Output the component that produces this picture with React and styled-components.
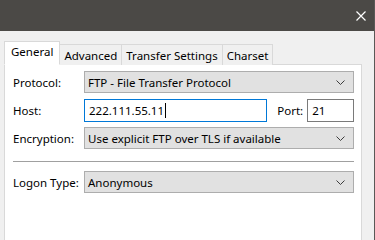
import React from 'react';
import styled, { createGlobalStyle } from 'styled-components';

const GlobalStyle = createGlobalStyle`
  html, body {
    margin: 0;
    padding: 0;
    background: #f0f0f0;
  }
  body {
    font-family: "Noto Sans", "Open Sans", sans-serif;
    font-size: 11.5px;
    color: #000;
  }
`;

const Window = styled.div`
  width: 375px;
  height: 240px;
  box-sizing: border-box;
  border-right: 1px solid #5a5856;
  background: #f0f0f0;
  overflow: hidden;
  display: flex;
  flex-direction: column;
`;

const TitleBar = styled.div`
  height: 31px;
  flex: none;
  background: #4b4946;
  display: flex;
  justify-content: flex-end;
  align-items: center;
`;

const CloseButton = styled.div`
  width: 26px;
  height: 31px;
  display: flex;
  align-items: center;
  justify-content: center;
`;

const Body = styled.div`
  flex: 1;
  padding: 10px 12px 0 4px;
  display: flex;
  flex-direction: column;
`;

const TabStrip = styled.div`
  display: flex;
  align-items: flex-end;
  height: 24px;
  position: relative;
  z-index: 1;
`;

const Tab = styled.div`
  box-sizing: border-box;
  height: ${({ active }) => (active ? '24px' : '21px')};
  padding: 0 ${({ active }) => (active ? '6px' : '4px')};
  margin-left: ${({ first }) => (first ? '0' : '-1px')};
  border: 1px solid #d9d9d9;
  border-bottom: ${({ active }) => (active ? '1px solid #fff' : 'none')};
  background: ${({ active }) => (active ? '#fff' : '#f0f0f0')};
  display: flex;
  align-items: center;
  padding-bottom: ${({ active }) => (active ? '3px' : '0')};
  white-space: nowrap;
  z-index: ${({ active }) => (active ? 2 : 1)};
  position: relative;
`;

const Panel = styled.div`
  flex: 1;
  margin-top: -1px;
  border: 1px solid #d9d9d9;
  border-bottom: none;
  background: #fff;
  padding: 6px 7px 0 8px;
  display: flex;
  flex-direction: column;
  gap: 6px;
`;

const Row = styled.div`
  display: flex;
  align-items: center;
  height: 22px;
`;

const Label = styled.span`
  width: 71px;
  flex: none;
  white-space: nowrap;
`;

const Combo = styled.div`
  flex: 1;
  height: 22px;
  box-sizing: border-box;
  border: 1px solid #adadad;
  background: #e1e1e1;
  display: flex;
  align-items: center;
  justify-content: space-between;
  padding: 0 8px 0 3px;
  white-space: nowrap;
`;

const TextBox = styled.div`
  box-sizing: border-box;
  height: 23px;
  width: ${({ w }) => w}px;
  border: 1px solid ${({ focused }) => (focused ? '#0078d7' : '#7a7a7a')};
  background: #fff;
  display: flex;
  align-items: center;
  padding-left: 4px;
`;

const Caret = styled.span`
  display: inline-block;
  width: 1px;
  height: 15px;
  background: #000;
  margin-left: 1px;
`;

const PortLabel = styled.span`
  margin-left: 10px;
  width: 30px;
`;

const Separator = styled.div`
  height: 1px;
  background: #a0a0a0;
  margin: 6px 0 3px;
`;

const Chevron = () => (
  <svg width="9" height="5" viewBox="0 0 9 5">
    <polyline points="0.5,0.5 4.5,4.5 8.5,0.5" fill="none" stroke="#3c3c3c" strokeWidth="1" />
  </svg>
);

const Select = ({ children }) => (
  <Combo>
    <span>{children}</span>
    <Chevron />
  </Combo>
);

export default function App() {
  return (
    <>
      <GlobalStyle />
      <Window>
        <TitleBar>
          <CloseButton>
            <svg width="10" height="10" viewBox="0 0 10 10">
              <path d="M0.5 0.5 L9.5 9.5 M9.5 0.5 L0.5 9.5" stroke="#fff" strokeWidth="1.2" />
            </svg>
          </CloseButton>
        </TitleBar>
        <Body>
          <TabStrip>
            <Tab active first>General</Tab>
            <Tab>Advanced</Tab>
            <Tab>Transfer Settings</Tab>
            <Tab>Charset</Tab>
          </TabStrip>
          <Panel>
            <Row>
              <Label>Protocol:</Label>
              <Select>FTP - File Transfer Protocol</Select>
            </Row>
            <Row>
              <Label>Host:</Label>
              <TextBox w={184} focused>
                222.111.55.11<Caret />
              </TextBox>
              <PortLabel>Port:</PortLabel>
              <TextBox w={47}>21</TextBox>
            </Row>
            <Row>
              <Label>Encryption:</Label>
              <Select>Use explicit FTP over TLS if available</Select>
            </Row>
            <Separator />
            <Row>
              <Label>Logon Type:</Label>
              <Select>Anonymous</Select>
            </Row>
          </Panel>
        </Body>
      </Window>
    </>
  );
}
